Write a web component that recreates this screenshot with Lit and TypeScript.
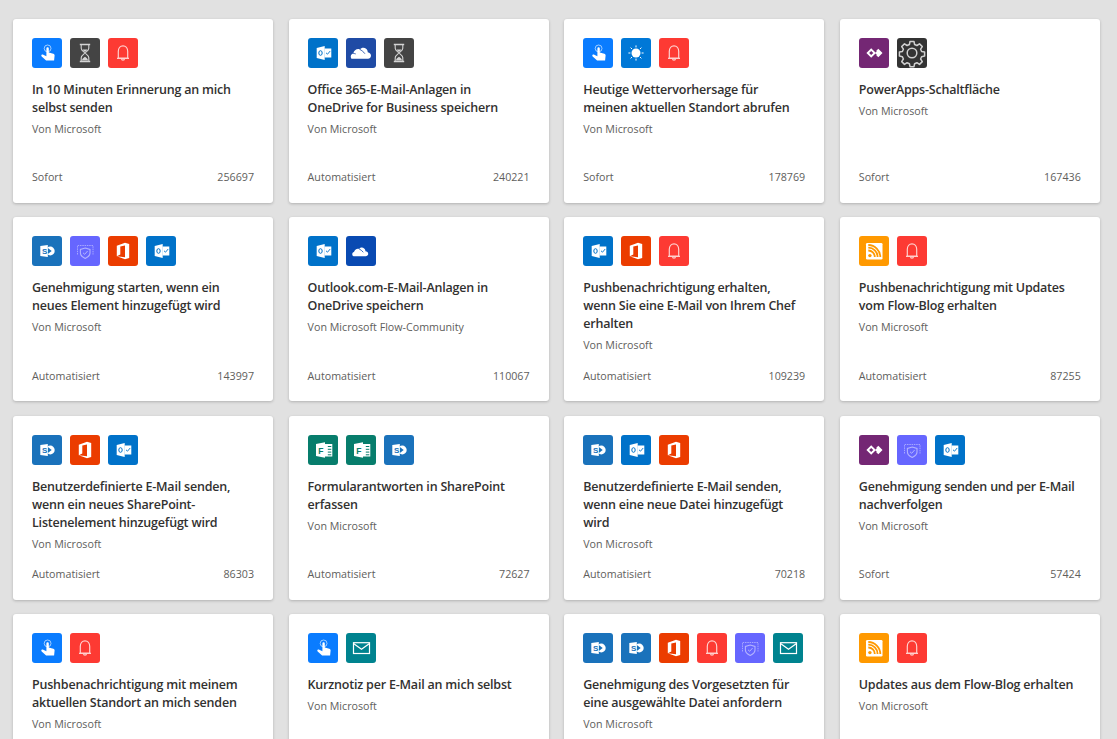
import { LitElement, html, css, svg } from "lit";
import { customElement } from "lit/decorators.js";

type IconKey = "touch" | "hourglass" | "bell" | "outlook" | "onedrive" | "onedrive2" | "sun" | "powerapps" | "gear" | "sharepoint" | "approvals" | "office" | "rss" | "forms" | "mail";

const ICONS: Record<IconKey, { bg: string; art: unknown }> = {
  touch: {
    bg: "#0a7cff",
    art: svg`<circle cx="15.600" cy="10.400" r="3.400" fill="none" stroke="#fff" stroke-opacity=".6" stroke-width="1"/>
      <path fill="#fff" d="M14.400 10.400a1.200 1.200 0 0 1 2.400 0v4.200l4.500 1.100c.9.200 1.400.9 1.300 1.800l-.5 5h-8l-4.400-4c-.6-.6-.5-1.500.2-1.900.5-.2 1-.1 1.400.1l3.100 1.600z"/>`,
  },
  hourglass: {
    bg: "#444444",
    art: svg`<path fill="none" stroke="#d4d4d4" stroke-width="1.600" d="M9.800 6.500h10.400M9.800 23.500h10.400"/>
      <path fill="none" stroke="#d4d4d4" stroke-width="1.100" d="M11.200 7v3.300c0 2.300 2.600 3.400 3.800 4.700-1.200 1.300-3.800 2.400-3.800 4.700V23M18.800 7v3.300c0 2.300-2.600 3.400-3.800 4.700 1.200 1.300 3.800 2.400 3.800 4.700V23"/>
      <path fill="#d4d4d4" d="M12.600 11.500h4.800c-.6 1.200-1.600 1.900-2.400 2.500-.8-.6-1.800-1.300-2.400-2.500zM12 22.500c.1-1.700 1.700-2.800 3-3.700 1.300.9 2.900 2 3 3.700z"/>`,
  },
  bell: {
    bg: "#fd3a33",
    art: svg`<path fill="none" stroke="#ffd0cd" stroke-width="1.200" d="M10.300 20v-6.500c0-3.300 2-5.700 4.700-5.700s4.700 2.400 4.700 5.700V20zM9 20.300h12"/>
      <path fill="none" stroke="#ffd0cd" stroke-width="1.200" d="M13.500 20.500c0 1 .7 1.700 1.500 1.700s1.500-.7 1.500-1.700"/>`,
  },
  outlook: {
    bg: "#0072c9",
    art: svg`<path fill="#fff" d="M16.500 10.500h6.800v9h-6.800z"/><path fill="none" stroke="#0072c9" stroke-width=".9" d="M18 14.800l1.500 1.400 2.700-3.200"/>
      <path fill="#fff" d="M8.700 10l8-2v14l-8-2z"/><ellipse cx="12.500" cy="15" rx="1.700" ry="2.300" fill="none" stroke="#0072c9" stroke-width="1"/>`,
  },
  onedrive: {
    bg: "#1f4ba5",
    art: svg`<path fill="#fff" d="M5.500 20.700c-1.500-2-.5-4.800 1.800-5.200.7-3.300 3.700-5.100 6.500-4.100 1.600-2 4.500-2.300 6.300-.7 1.300 1.100 1.700 2.500 1.600 3.600 2 .3 3.400 1.700 3.300 3.500-.1 1.800-1.500 3-3 3H7.500c-.8 0-1.500.1-2-.1z"/>
      <path fill="none" stroke="#1f4ba5" stroke-width=".9" d="M13.800 11.400c1.800 1 3.700 2.300 5.100 4.300M7.300 15.500c.8 0 1.500.1 2.400.4"/>`,
  },
  onedrive2: {
    bg: "#094ab2",
    art: svg`<path fill="#fff" d="M7 20c-1.300-1.300-.9-3.500 1-4 .6-2.500 2.900-3.900 5.100-3.100 1.300-1.600 3.600-1.800 5-.5 1.100.9 1.400 2 1.300 2.900 1.700.2 2.900 1.300 2.800 2.700-.1 1.300-1.200 2.200-2.500 2.200H8.500c-.6 0-1.100 0-1.500-.2z"/>
      <path fill="none" stroke="#094ab2" stroke-width=".8" d="M13.100 12.900c1.500.8 3 1.800 4.200 3.400"/>`,
  },
  sun: {
    bg: "#0078d7",
    art: svg`<circle cx="15" cy="15" r="4.500" fill="#fff"/>
      <path stroke="#fff" stroke-width="1" stroke-linecap="round" d="M15 7.800v1.200M15 21v1.200M7.800 15H9M21 15h1.200M9.900 9.900l.8.8M19.300 19.300l.8.8M9.900 20.100l.8-.8M19.300 10.700l.8-.8"/>`,
  },
  powerapps: {
    bg: "#742774",
    art: svg`<path fill="#fff" fill-rule="evenodd" d="M12.200 10.200l4.800 4.800-4.800 4.800L7.400 15zM12.200 12.900L10.100 15l2.100 2.100 2.100-2.100z"/><path fill="#fff" d="M19.300 10.800l4.200 4.200-4.200 4.200-2-2 2.200-2.200-2.200-2.200z"/><path fill="#fff" d="M18.500 12.600l2.400 2.400-2.400 2.400-2.400-2.400z"/>`,
  },
  gear: {
    bg: "#333333",
    art: svg`<path fill="none" stroke="#cfcfcf" stroke-width="1.500" stroke-linejoin="round" d="M13 3.500h4l.6 3 2.300 1 2.600-1.700 2.800 2.800-1.700 2.600 1 2.300 3 .6v4l-3 .6-1 2.300 1.700 2.600-2.800 2.800-2.600-1.700-2.300 1-.6 3h-4l-.6-3-2.300-1-2.600 1.700-2.800-2.800 1.700-2.600-1-2.300-3-.6v-4l3-.6 1-2.300L4.700 8.600l2.800-2.800 2.600 1.700 2.300-1z"/><circle cx="15" cy="15" r="4.800" fill="none" stroke="#cfcfcf" stroke-width="1.500"/>`,
  },
  sharepoint: {
    bg: "#1a72bb",
    art: svg`<circle cx="18.300" cy="15" r="4.400" fill="#fff"/><path fill="#1a72bb" d="M15.500 11.700l4.200 3.300-4.200 3.300z"/>
      <path fill="#fff" d="M8.300 10l7.500-1v12l-7.500-1z"/>
      <text x="9.900" y="18" font-family="Liberation Sans, sans-serif" font-size="8" font-weight="700" fill="#1a72bb">S</text>`,
  },
  approvals: {
    bg: "#6666ff",
    art: svg`<path fill="none" stroke="#a6a6ff" stroke-width="1" stroke-dasharray="1.500 .8" d="M7.500 18.500v-9h15.500v9"/>
      <path fill="none" stroke="#b3b3ff" stroke-width="1.100" d="M15.200 12l4.800 1.500v3.500c0 2.500-2.200 4.200-4.800 5.400-2.600-1.200-4.800-2.900-4.800-5.400v-3.500z"/>
      <path fill="none" stroke="#b3b3ff" stroke-width="1" d="M13 16.800l1.700 1.500 2.900-3.300"/>`,
  },
  office: {
    bg: "#eb3c00",
    art: svg`<path fill="#fff" fill-rule="evenodd" d="M8.800 9.800l8.200-3 4.200 1.300v13.800L17 23.200l-8.200-3 8.200 1V9.400l-4.700 1.200v8l-3.500 1.600z"/>`,
  },
  rss: {
    bg: "#ff9900",
    art: svg`<rect x="7" y="7" width="16.500" height="16.500" rx="1.300" fill="#fff"/>
      <circle cx="10.900" cy="19.600" r="1.700" fill="#ff9900"/>
      <path fill="none" stroke="#ff9900" stroke-width="1.800" d="M9.300 14.500c3.600 0 6.500 2.900 6.500 6.500M9.300 11.700c5.100 0 9.300 4.200 9.300 9.300M9.300 9c6.600 0 12 5.400 12 12"/>`,
  },
  forms: {
    bg: "#077d6c",
    art: svg`<path fill="#fff" d="M17 9h7.300v12.500H17z"/>
      <path stroke="#077d6c" stroke-width="1" d="M19.800 11.500h3.500M19.800 14.300h3.500M19.800 17.100h3.500M19.800 19.800h3.500"/>
      <path fill="#fff" d="M8 9l9-1.800v15.600L8 21z"/>
      <text x="10.200" y="18.500" font-family="Liberation Sans, sans-serif" font-size="8.500" font-weight="700" fill="#077d6c">F</text>`,
  },
  mail: {
    bg: "#00838f",
    art: svg`<rect x="7.500" y="9.700" width="16" height="10.800" fill="none" stroke="#fff" stroke-width="1.200"/>
      <path fill="none" stroke="#fff" stroke-width="1.200" d="M7.500 10.500l8 5.800 8-5.800"/>`,
  },
};

interface Card { icons: IconKey[]; title: string; author?: string; type: string; count: string; }

const M = "Von Microsoft";
const CARDS: Card[] = [
  { icons: ["touch", "hourglass", "bell"], title: "In 10 Minuten Erinnerung an mich selbst senden", type: "Sofort", count: "256697" },
  { icons: ["outlook", "onedrive", "hourglass"], title: "Office 365-E-Mail-Anlagen in OneDrive for Business speichern", type: "Automatisiert", count: "240221" },
  { icons: ["touch", "sun", "bell"], title: "Heutige Wettervorhersage für meinen aktuellen Standort abrufen", type: "Sofort", count: "178769" },
  { icons: ["powerapps", "gear"], title: "PowerApps-Schaltfläche", type: "Sofort", count: "167436" },
  { icons: ["sharepoint", "approvals", "office", "outlook"], title: "Genehmigung starten, wenn ein neues Element hinzugefügt wird", type: "Automatisiert", count: "143997" },
  { icons: ["outlook", "onedrive2"], title: "Outlook.com-E-Mail-Anlagen in OneDrive speichern", author: "Von Microsoft Flow-Community", type: "Automatisiert", count: "110067" },
  { icons: ["outlook", "office", "bell"], title: "Pushbenachrichtigung erhalten, wenn Sie eine E-Mail von Ihrem Chef erhalten", type: "Automatisiert", count: "109239" },
  { icons: ["rss", "bell"], title: "Pushbenachrichtigung mit Updates vom Flow-Blog erhalten", type: "Automatisiert", count: "87255" },
  { icons: ["sharepoint", "office", "outlook"], title: "Benutzerdefinierte E-Mail senden, wenn ein neues SharePoint-Listenelement hinzugefügt wird", type: "Automatisiert", count: "86303" },
  { icons: ["forms", "forms", "sharepoint"], title: "Formularantworten in SharePoint erfassen", type: "Automatisiert", count: "72627" },
  { icons: ["sharepoint", "outlook", "office"], title: "Benutzerdefinierte E-Mail senden, wenn eine neue Datei hinzugefügt wird", type: "Automatisiert", count: "70218" },
  { icons: ["powerapps", "approvals", "outlook"], title: "Genehmigung senden und per E-Mail nachverfolgen", type: "Sofort", count: "57424" },
  { icons: ["touch", "bell"], title: "Pushbenachrichtigung mit meinem aktuellen Standort an mich senden", type: "Sofort", count: "" },
  { icons: ["touch", "mail"], title: "Kurznotiz per E-Mail an mich selbst", type: "Sofort", count: "" },
  { icons: ["sharepoint", "sharepoint", "office", "bell", "approvals", "mail"], title: "Genehmigung des Vorgesetzten für eine ausgewählte Datei anfordern", type: "Sofort", count: "" },
  { icons: ["rss", "bell"], title: "Updates aus dem Flow-Blog erhalten", type: "Automatisiert", count: "" },
];

@customElement("app-root")
export class AppRoot extends LitElement {
  static styles = css`
    :host {
      display: block;
      height: 739px;
      overflow: hidden;
      background: #e1e1e1;
      font-family: "Open Sans", "Noto Sans", sans-serif;
    }
    .grid {
      display: grid;
      grid-template-columns: repeat(4, 260px);
      grid-auto-rows: 184px;
      column-gap: 15.6px;
      row-gap: 14.4px;
      padding: 19px 0 0 13px;
    }
    .card {
      display: flex;
      flex-direction: column;
      box-sizing: border-box;
      padding: 19px 19px 0;
      background: #fff;
      border-radius: 3px;
      box-shadow: 0 1px 3px rgba(0, 0, 0, 0.22);
      color: #323130;
    }
    .icons { display: flex; gap: 8px; }
    .icon { width: 30px; height: 30px; border-radius: 3px; display: block; }
    .title {
      margin-top: 13px;
      padding-right: 4px;
      font-size: 12.5px;
      letter-spacing: -0.2px;
      font-weight: 600;
      line-height: 18px;
    }
    .author {
      margin-top: 4px;
      font-size: 10.7px;
      line-height: 16px;
      color: #605e5c;
    }
    .foot {
      margin-top: auto;
      margin-bottom: 17.8px;
      display: flex;
      justify-content: space-between;
      font-size: 10.7px;
      line-height: 16px;
      color: #605e5c;
    }
  `;

  render() {
    return html`<div class="grid">
      ${CARDS.map(
        (c) => html`<article class="card">
          <div class="icons">
            ${c.icons.map(
              (k) => html`<svg class="icon" viewBox="0 0 30 30" style="background:${ICONS[k].bg}">${ICONS[k].art}</svg>`
            )}
          </div>
          <div class="title">${c.title}</div>
          <div class="author">${c.author ?? M}</div>
          <div class="foot"><span>${c.type}</span><span>${c.count}</span></div>
        </article>`
      )}
    </div>`;
  }
}
